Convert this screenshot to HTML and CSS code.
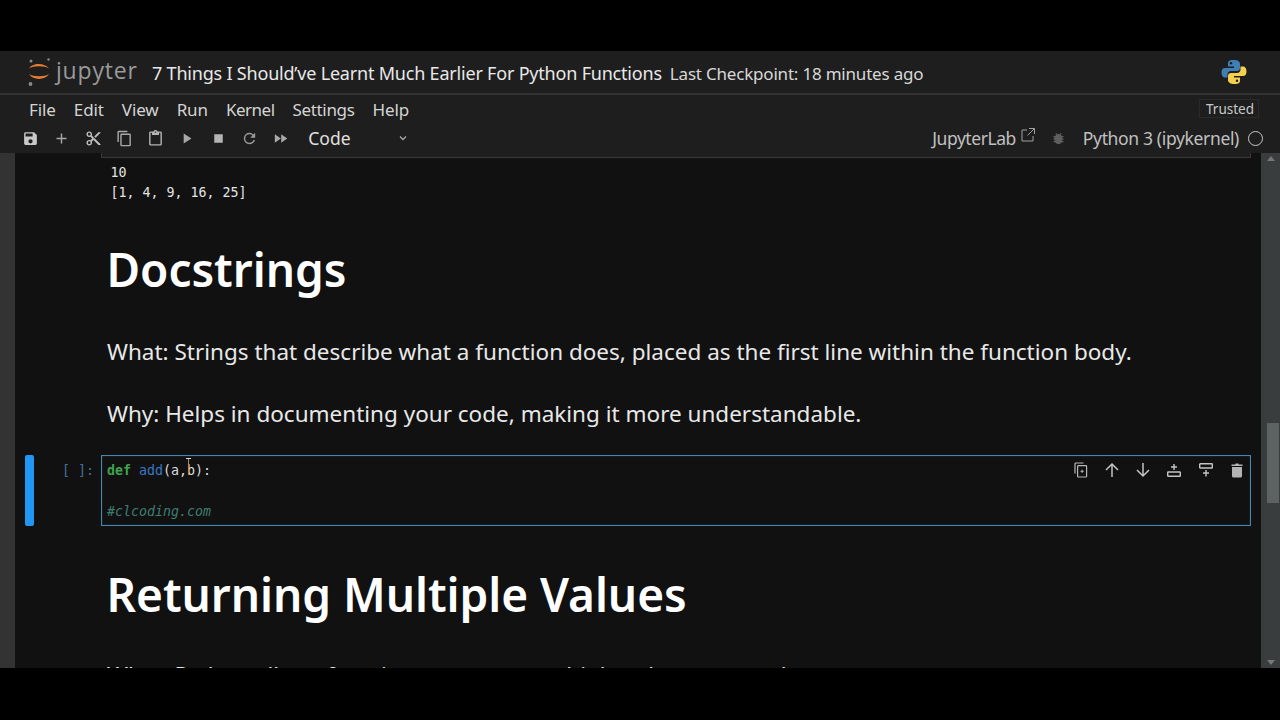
FILE: index.html
```html
<!DOCTYPE html>
<html lang="en">
<head>
<meta charset="utf-8">
<title>Jupyter Notebook</title>
<link rel="stylesheet" href="styles.css">
</head>
<body>
<div class="app">
  <header class="topbar">
    <svg class="logo-mark" viewBox="0 0 26 30" width="26" height="30">
      <circle cx="4" cy="4" r="1.5" fill="#8a8a8a"/>
      <circle cx="21.500" cy="2.500" r="1.200" fill="#8a8a8a"/>
      <circle cx="3.500" cy="27" r="1.900" fill="#8a8a8a"/>
      <path d="M2 11.500C5 5.500 18 5.500 22 11.500C18 8.500 6 8.500 2 11.500Z" fill="#e67a30"/>
      <path d="M2 17C6 23.500 18 23.500 22 17C18 20 6 20 2 17Z" fill="#e67a30"/>
    </svg>
    <span class="logo-text">jupyter</span>
    <span class="doc-title">7 Things I Should’ve Learnt Much Earlier For Python Functions</span>
    <span class="checkpoint">Last Checkpoint: 18 minutes ago</span>
    <svg class="py-logo" viewBox="0 0 26 26" width="26" height="26">
      <path d="M12.800 1C7 1 7 3 7 5V7.500H13V9H4C1.500 9 .5 11 .5 13.500S1.500 18.500 4 18.500H6.500V15.500C6.500 13.500 8 12 10 12H16C17.800 12 19 10.800 19 9V5C19 2.500 16.500 1 12.800 1Z" fill="#3f7fb5"/>
      <circle cx="10" cy="4.300" r="1.200" fill="#1b1b1b"/>
      <path d="M13.200 25C19 25 19 23 19 21V18.500H13V17H22C24.500 17 25.500 15 25.500 12.500S24.500 7.500 22 7.500H19.500V10.500C19.500 12.500 18 14 16 14H10C8.200 14 7 15.200 7 17V21C7 23.500 9.500 25 13.200 25Z" fill="#f5d04e"/>
      <circle cx="16" cy="21.700" r="1.200" fill="#1b1b1b"/>
    </svg>
  </header>
  <nav class="menubar">
    <span class="menu-item">File</span>
    <span class="menu-item">Edit</span>
    <span class="menu-item">View</span>
    <span class="menu-item">Run</span>
    <span class="menu-item tight">Kernel</span>
    <span class="menu-item snug">Settings</span>
    <span class="menu-item">Help</span>
    <span class="trusted">Trusted</span>
  </nav>
  <div class="toolbar">
    <svg class="tool" viewBox="0 0 24 24"><path fill="#c8c8c8" d="M17 3H5a2 2 0 0 0-2 2v14a2 2 0 0 0 2 2h14a2 2 0 0 0 2-2V7l-4-4zm-5 16a3 3 0 1 1 0-6 3 3 0 0 1 0 6zm3-10H5V5h10v4z"/></svg>
    <svg class="tool" viewBox="0 0 24 24"><path fill="#a8a8a8" d="M19 13h-6v6h-2v-6H5v-2h6V5h2v6h6v2z"/></svg>
    <svg class="tool" viewBox="0 0 24 24"><path fill="#c0c0c0" d="M9.640 7.640c.23-.5.36-1.050.36-1.640 0-2.210-1.790-4-4-4S2 3.790 2 6s1.790 4 4 4c.59 0 1.140-.13 1.640-.36L10 12l-2.360 2.360C7.140 14.130 6.590 14 6 14c-2.210 0-4 1.790-4 4s1.790 4 4 4 4-1.790 4-4c0-.59-.13-1.140-.36-1.640L12 14l7 7h3v-1L9.640 7.640zM6 8a2 2 0 1 1 0-4 2 2 0 0 1 0 4zm0 12a2 2 0 1 1 0-4 2 2 0 0 1 0 4zm6-7.500a.5.5 0 1 1 0-1 .5.5 0 0 1 0 1zM19 3l-6 6 2 2 7-7V3h-3z"/></svg>
    <svg class="tool" viewBox="0 0 24 24"><path fill="#a8a8a8" d="M16 1H4a2 2 0 0 0-2 2v14h2V3h12V1zm3 4H8a2 2 0 0 0-2 2v14a2 2 0 0 0 2 2h11a2 2 0 0 0 2-2V7a2 2 0 0 0-2-2zm0 16H8V7h11v14z"/></svg>
    <svg class="tool" viewBox="0 0 24 24"><path fill="#b4b4b4" d="M19 2h-4.180C14.400.84 13.300 0 12 0S9.600.84 9.180 2H5a2 2 0 0 0-2 2v16a2 2 0 0 0 2 2h14a2 2 0 0 0 2-2V4a2 2 0 0 0-2-2zm-7 0a1 1 0 1 1 0 2 1 1 0 0 1 0-2zm7 18H5V4h2v3h10V4h2v16z"/></svg>
    <svg class="tool" viewBox="0 0 24 24"><path fill="#a8a8a8" d="M8 5v14l11-7z"/></svg>
    <svg class="tool" viewBox="0 0 24 24"><path fill="#b4b4b4" d="M6 6h12v12H6z"/></svg>
    <svg class="tool" viewBox="0 0 24 24"><path fill="#9c9c9c" d="M17.650 6.350A7.960 7.960 0 0 0 12 4a8 8 0 1 0 7.730 10h-2.080A6 6 0 1 1 12 6c1.660 0 3.140.69 4.220 1.780L13 11h7V4l-2.350 2.350z"/></svg>
    <svg class="tool" viewBox="0 0 24 24"><path fill="#a8a8a8" d="M4 18l8.500-6L4 6v12zm9-12v12l8.500-6L13 6z"/></svg>
    <div class="cell-type">
      <span>Code</span>
      <svg class="chevron" viewBox="0 0 12 12" width="12" height="12"><path d="M3 4.500l3 3 3-3" fill="none" stroke="#a8a8a8" stroke-width="1.300"/></svg>
    </div>
    <div class="kernel">
      <span class="lab-link">JupyterLab</span>
      <svg class="ext" viewBox="0 0 16 16" width="16" height="16"><path d="M7 3H2v11h11V9M9 1.500h5.500V7M14.500 1.500L7.500 8.500" fill="none" stroke="#a0a0a0" stroke-width="1"/></svg>
      <svg class="bug" viewBox="0 0 24 24" width="15" height="15"><path fill="#5e5e5e" d="M20 8h-2.810a5.985 5.985 0 0 0-1.820-1.960L17 4.410 15.590 3l-2.170 2.170a6 6 0 0 0-2.830 0L8.410 3 7 4.410l1.620 1.630C7.880 6.550 7.260 7.220 6.810 8H4v2h2.090c-.5.330-.9.660-.9.999V12H4v2h2v1c0 .34.040.67.090 1H4v2h2.810c1.040 1.790 2.970 3 5.190 3s4.150-1.210 5.190-3H20v-2h-2.090c.05-.33.090-.66.090-1v-1h2v-2h-2v-1c0-.34-.04-.67-.09-1H20V8z"/></svg>
      <span class="kernel-name">Python 3 (ipykernel)</span>
      <span class="kernel-status"></span>
    </div>
  </div>
  <div class="workspace">
    <div class="left-rail"></div>
    <main class="notebook">
      <div class="prev-cell-edge"></div>
      <pre class="output">10
[1, 4, 9, 16, 25]</pre>
      <h1 class="heading first">Docstrings</h1>
      <p class="para what">What: Strings that describe what a function does, placed as the first line within the function body.</p>
      <p class="para why">Why: Helps in documenting your code, making it more understandable.</p>
      <section class="cell">
        <div class="collapser"></div>
        <div class="prompt">[ ]:</div>
        <div class="editor">
          <pre class="code"><span class="kw">def</span> <span class="fn">add</span>(a,b):

<span class="cm">#clcoding.com</span></pre>
          <div class="cell-tools">
            <svg class="ct" viewBox="0 0 16 16"><path d="M10.500 1H3a1 1 0 0 0-1 1V11.500" fill="none" stroke="#b8b8b8" stroke-width="1.200"/><rect x="4.600" y="3.600" width="9" height="11.400" rx=".8" fill="none" stroke="#b8b8b8" stroke-width="1.200"/><path d="M7.500 9.300h3.200M9.100 7.700v3.200" stroke="#b8b8b8" stroke-width="1"/></svg>
            <svg class="ct" viewBox="0 0 16 16"><path d="M8 15V2M2 8l6-6 6 6" fill="none" stroke="#c4c4c4" stroke-width="1.500"/></svg>
            <svg class="ct" viewBox="0 0 16 16"><path d="M8 1v13M2 8l6 6 6-6" fill="none" stroke="#c4c4c4" stroke-width="1.500"/></svg>
            <svg class="ct" viewBox="0 0 16 16"><rect x="1.700" y="10" width="12.600" height="4.300" rx=".6" fill="none" stroke="#c4c4c4" stroke-width="1.400"/><path d="M8 2v6M5 5h6" stroke="#c4c4c4" stroke-width="1.400"/></svg>
            <svg class="ct" viewBox="0 0 16 16"><rect x="1.700" y="1.700" width="12.600" height="4.300" rx=".6" fill="none" stroke="#c4c4c4" stroke-width="1.400"/><path d="M8 8v6.500M5 11h6" stroke="#c4c4c4" stroke-width="1.400"/></svg>
            <svg class="ct" viewBox="0 0 16 16"><path d="M3 5h10v9a1.500 1.500 0 0 1-1.500 1.500h-7A1.500 1.500 0 0 1 3 14zM2.500 2.500H6L6.700 1.500h2.600L10 2.500h3.500V4h-11z" fill="#b4b4b4"/></svg>
          </div>
          <span class="i-beam"></span>
        </div>
      </section>
      <h1 class="heading second">Returning Multiple Values</h1>
      <p class="para cut">What: Python allows functions to return multiple values as a tuple.</p>
    </main>
    <div class="scrollbar">
      <span class="arrow up"></span>
      <div class="thumb"></div>
      <span class="arrow down"></span>
    </div>
  </div>
</div>
</body>
</html>
```
FILE: styles.css
```css
* { box-sizing: border-box; }
html, body { margin: 0; height: 100%; background: #000; overflow: hidden; }
body { padding: 51px 0 52px; font-family: "Noto Sans", "Open Sans", sans-serif; }
.app { height: 617px; display: flex; flex-direction: column; background: #1e1e1e; overflow: hidden; }

.topbar { height: 44px; flex: none; display: flex; align-items: center; padding: 0 33px 0 27px; border-bottom: 2px solid #333; color: #e6e6e6; }
.logo-mark { flex: none; }
.logo-text { margin-left: 3px; margin-top: -5px; width: 94px; font-size: 23px; letter-spacing: .8px; color: #9a9a9a; font-family: "Open Sans", sans-serif; }
.doc-title { font-size: 18px; color: #e8e8e8; white-space: nowrap; letter-spacing: -.2px; margin: 2px 0 0 2px; }
.checkpoint { margin: 2px 0 0 8px; font-size: 17px; color: #d8d8d8; white-space: nowrap; letter-spacing: -.2px; }
.py-logo { margin-left: auto; flex: none; }

.menubar { height: 29px; flex: none; display: flex; align-items: center; padding: 0 21px 0 29px; gap: 18px; color: #d4d4d4; font-size: 17px; }
.menu-item { white-space: nowrap; letter-spacing: -.1px; }
.menu-item.tight { letter-spacing: -.5px; }
.menu-item.snug { letter-spacing: -.35px; }
.trusted { margin-left: auto; font-size: 13.500px; color: #c8c8c8; border: 1px solid #2a2a2a; padding: 0 6px; width: 60px; text-align: center; height: 19px; line-height: 18px; margin-top: -2px; white-space: nowrap; }

.toolbar { height: 29px; flex: none; display: flex; align-items: center; padding: 0 17px 0 21px; color: #d4d4d4; }
.tool { width: 19px; height: 19px; flex: none; margin-right: 12.250px; padding: 1px; }
.cell-type { display: flex; align-items: center; width: 110px; font-size: 17.500px; color: #e0e0e0; margin: -2px 0 0 6px; }
.cell-type span { width: 89px; }
.kernel { margin-left: auto; display: flex; align-items: center; font-size: 17.500px; color: #c0c0c0; margin-top: -1px; }
.lab-link { letter-spacing: -.45px; }
.ext { margin: -6px 0 0 4px; }
.bug { margin: 0 17px 0 15px; }
.kernel-name { letter-spacing: -.35px; }
.kernel-status { width: 15px; height: 15px; border: 1.500px solid #c8c8c8; border-radius: 50%; margin-left: 9px; }

.workspace { flex: 1; min-height: 0; display: flex; background: #111; }
.left-rail { width: 15px; flex: none; background: #333; }
.notebook { flex: 1; min-width: 0; overflow: hidden; position: relative; background: #111; }
.prev-cell-edge { height: 5px; margin: 0 10px 0 86px; border: 1px solid #3a3a3a; border-top: 0; background: #1e1e1e; }
.output { margin: 5px 0 0 95.500px; font: 13.300px/19.500px "DejaVu Sans Mono", monospace; color: #e4e4e4; }
.heading { margin: 0 0 0 91.500px; font-weight: 600; font-size: 46px; line-height: 60px; color: #fff; white-space: nowrap; letter-spacing: -.05px; }
.heading.first { margin-top: 37px; }
.heading.second { margin-top: 38px; }
.para { margin: 0 0 0 92px; font-size: 22.500px; line-height: 32px; color: #e8e8e8; white-space: nowrap; }
.para.what { margin-top: 37px; }
.para.why { margin-top: 30px; }
.para.cut { margin-top: 35px; }

.cell { display: flex; margin: 25px 10px 0 0; height: 71px; }
.collapser { width: 9px; margin-left: 10px; background: #2196f3; border-radius: 2px; flex: none; }
.prompt { width: 67px; flex: none; text-align: right; padding: 6px 7px 0 0; font: 13.300px/19px "DejaVu Sans Mono", monospace; color: #41719a; }
.editor { flex: 1; position: relative; border: 1px solid #4588b3; background: #111; box-shadow: inset 0 0 1px #3f7ea8; }
.code { margin: 0; padding: 5px 5px 0; font: 13.300px/20.300px "DejaVu Sans Mono", monospace; color: #dcdcdc; }
.kw { color: #3fa34d; font-weight: 700; }
.fn { color: #3a78c2; }
.cm { color: #3f7d72; font-style: italic; }
.cell-tools { position: absolute; top: 6px; right: 5px; display: flex; gap: 15.300px; }
.ct { width: 16px; height: 16px; display: block; }
.i-beam { position: absolute; left: 86px; top: 2px; width: 1px; height: 17px; background: #a78a5e; }
.i-beam::before { content: ""; position: absolute; left: -2px; top: 0; width: 5px; height: 1px; background: #ddd; }

.scrollbar { width: 19px; flex: none; background: #3a3d3d; position: relative; }
.thumb { position: absolute; top: 270px; left: 6px; width: 12px; height: 80px; background: #5c6362; }
.arrow { position: absolute; left: 6px; width: 0; height: 0; border-left: 4px solid transparent; border-right: 4px solid transparent; }
.arrow.up { top: 3px; border-bottom: 5px solid #777; }
.arrow.down { bottom: 3px; border-top: 5px solid #777; }
```
